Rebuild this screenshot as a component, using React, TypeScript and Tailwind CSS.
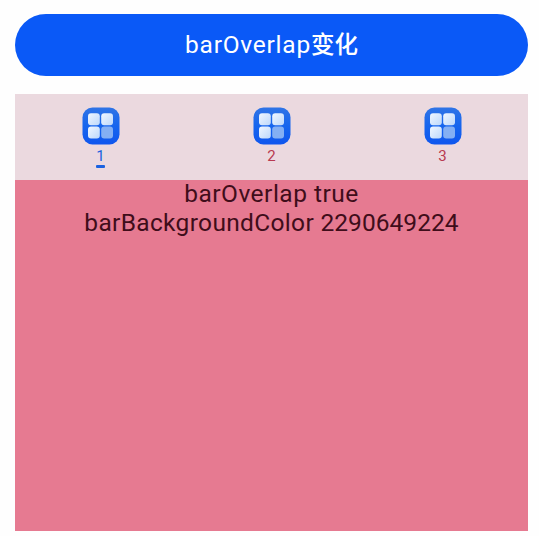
const tabs = [
  { label: '1', active: true },
  { label: '2', active: false },
  { label: '3', active: false },
];

function AppIcon({ id }: { id: string }) {
  return (
    <svg width="38" height="38" viewBox="0 0 38 38" className="block">
      <defs>
        <linearGradient id={`bg-${id}`} x1="0" y1="0" x2="0" y2="1">
          <stop offset="0" stopColor="#2f74e6" />
          <stop offset="0.5" stopColor="#1665ee" />
          <stop offset="1" stopColor="#0f56ee" />
        </linearGradient>
        <linearGradient id={`tile-${id}`} x1="0" y1="0" x2="1" y2="1">
          <stop offset="0" stopColor="#f0f7ff" />
          <stop offset="1" stopColor="#bdd8fb" />
        </linearGradient>
      </defs>
      <rect x="0.5" y="0.5" width="37" height="37" rx="10" fill={`url(#bg-${id})`} />
      <rect x="6" y="6.3" width="11.8" height="12" rx="3" fill={`url(#tile-${id})`} />
      <rect x="19.2" y="6.3" width="11.8" height="12" rx="3" fill={`url(#tile-${id})`} />
      <rect x="6" y="19.6" width="11.8" height="12" rx="3" fill={`url(#tile-${id})`} />
      <rect x="19.2" y="19.6" width="11.8" height="12" rx="3" fill="#84aff3" />
    </svg>
  );
}

export default function App() {
  return (
    <div className="h-[536px] w-[539px] overflow-hidden bg-[#fefefe] pt-[14px] pr-[11px] pl-[15px] font-['Roboto','Noto_Sans_CJK_SC',sans-serif]">
      <button className="flex h-[61.5px] w-full items-center justify-center rounded-full bg-[#0a59f7] leading-[28px] text-white">
        <span className="text-[24.5px] tracking-[0.75px]">
          barOverlap<span className="text-[23.5px] font-medium tracking-normal">变化</span>
        </span>
      </button>
      <div className="mt-[18px] h-[437.5px] bg-[#e67a91]">
        <div className="grid h-[86.5px] grid-cols-3 bg-[#ebd9df]">
          {tabs.map((tab) => (
            <div key={tab.label} className="flex flex-col items-center pt-[13.5px]">
              <AppIcon id={tab.label} />
              <span
                className={`mt-[3px] text-[15px] leading-[17px] ${tab.active ? 'text-[#1b62e0]' : 'text-[#b83a50]'}`}
              >
                {tab.label}
              </span>
              {tab.active && <span className="h-[3px] w-[9px] rounded-[1px] bg-[#1b62e0]" />}
            </div>
          ))}
        </div>
        <div className="-mt-px flex flex-col items-center text-[24.5px] leading-[29px] text-[#3f0d1a]">
          <span className="tracking-[0.5px]">barOverlap true</span>
          <span className="tracking-[0.33px]">
            barBackgroundColor <span className="tracking-[0.05px]">2290649224</span>
          </span>
        </div>
      </div>
    </div>
  );
}
